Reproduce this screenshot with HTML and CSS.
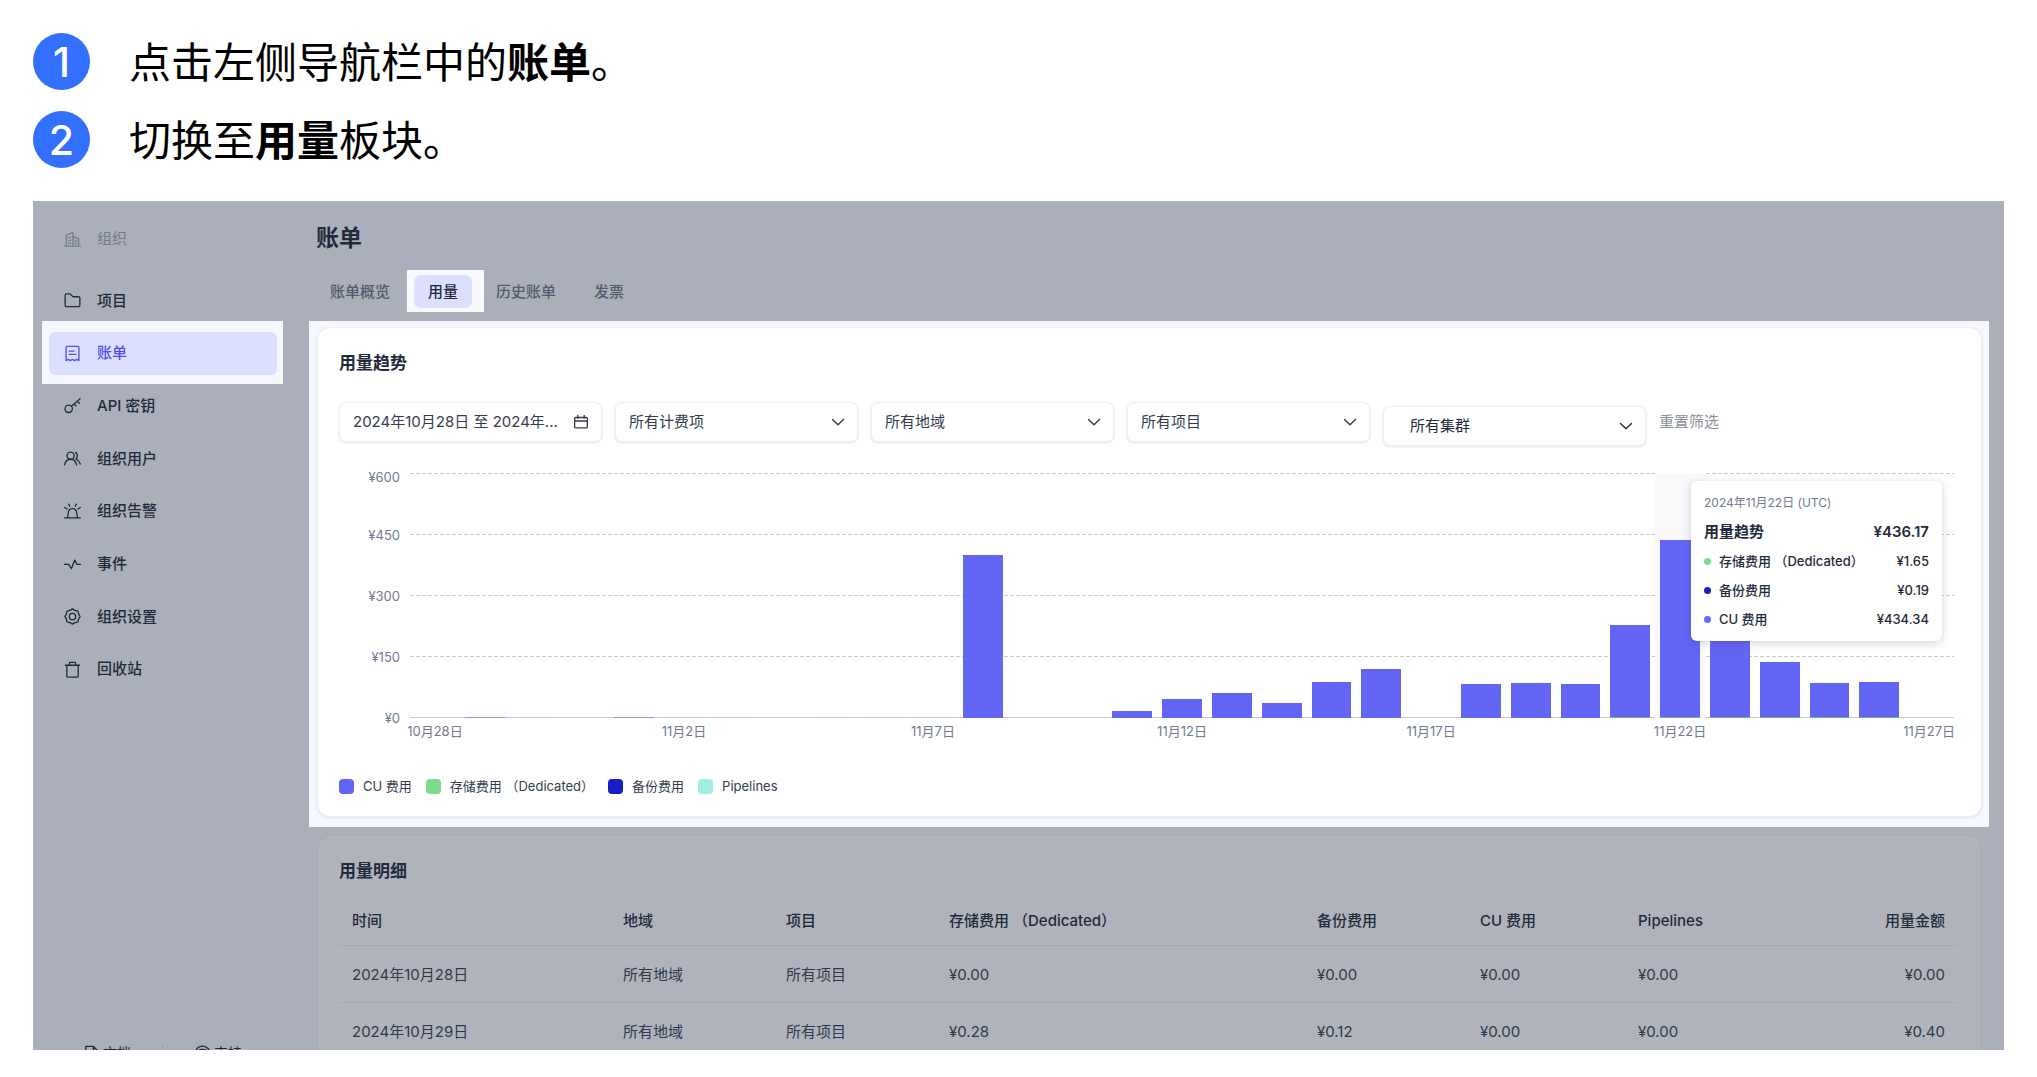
FILE: index.html
```html
<!DOCTYPE html>
<html lang="zh-CN">
<head>
<meta charset="utf-8">
<title>账单用量</title>
<link rel="stylesheet" href="styles.css">
</head>
<body>
<ol class="steps">
  <li><span class="step-no">1</span><p>点击左侧导航栏中的<b>账单</b>。</p></li>
  <li><span class="step-no">2</span><p>切换至<b>用量</b>板块。</p></li>
</ol>

<div class="app">
  <aside class="sidebar">
    <div class="org">
      <svg class="icon" viewBox="0 0 18 18"><path d="M0 16h18M2.500 16V4.500L9.500 1.500V16M9.500 6L15.500 8v8M5 7h2M5 10h2M5 13h2M11.500 10.500h2M11.500 13.200h2"/></svg>
      <span>组织</span>
    </div>
    <nav>
      <ul class="menu">
        <li><a href="#"><svg class="icon" viewBox="0 0 18 18"><path d="M1.200 3.500a1.500 1.500 0 0 1 1.500-1.500h3.800l3 3h5.800a1.500 1.500 0 0 1 1.500 1.500v7.500a1.500 1.500 0 0 1-1.500 1.500H2.700a1.500 1.500 0 0 1-1.500-1.500z"/></svg><span>项目</span></a></li>
        <li class="current"><a href="#" aria-current="page"><svg class="icon" viewBox="0 0 18 18"><path d="M2.200 16.500V2.500a1 1 0 0 1 1-1h11.600a1 1 0 0 1 1 1v14l-2.300-1.200-2.200 1.200-2.300-1.200-2.300 1.200-2.200-1.200zM5.500 6.500h5M5.500 10h7"/></svg><span>账单</span></a></li>
        <li><a href="#"><svg class="icon" viewBox="0 0 18 18"><circle cx="5" cy="12.500" r="3.900"/><path d="M7.900 9.700L17 1.800M10.800 7.200l2 2.400M14.200 4.300l2 2.300"/></svg><span>API 密钥</span></a></li>
        <li><a href="#"><svg class="icon" viewBox="0 0 18 18"><circle cx="7" cy="6" r="3.800"/><path d="M.6 15.800c.8-3.800 3.400-6 6.400-6s5.500 2.200 6.300 6M12.300 2.500c2.400 1.600 2.400 5.200.3 7 2.200 1 3.900 2.700 4.700 5.300"/></svg><span>组织用户</span></a></li>
        <li><a href="#"><svg class="icon" viewBox="0 0 18 18"><path d="M.8 15.800h16.400M3.800 15.500l1-6.500c.3-1.800 1.800-3 4.200-3s3.900 1.200 4.200 3l1 6.500M5 1.200l1.100 2.200M13 1.200l-1.100 2.200M.8 4.700l2.300 1.500M17.200 4.700l-2.300 1.500"/></svg><span>组织告警</span></a></li>
        <li><a href="#"><svg class="icon" viewBox="0 0 18 18"><path d="M.5 8.800H5l2.800 4.700 3.600-9.200 2.200 4.500h4"/></svg><span>事件</span></a></li>
        <li><a href="#"><svg class="icon" viewBox="0 0 18 18"><path d="M9 .9l2.600 1.600 3.200.7.700 3.200L17.100 9l-1.600 2.600-.7 3.200-3.200.7L9 17.100l-2.600-1.600-3.200-.7-.7-3.200L.9 9l1.600-2.600.7-3.200 3.200-.7z"/><circle cx="9" cy="9" r="3.400"/></svg><span>组织设置</span></a></li>
        <li><a href="#"><svg class="icon" viewBox="0 0 18 18"><path d="M1.500 4.500h15M3 4.800v11a1.300 1.300 0 0 0 1.300 1.300h9.400a1.300 1.300 0 0 0 1.300-1.300v-11M5.500 4.300L6 1.500h6l.5 2.800"/></svg><span>回收站</span></a></li>
      </ul>
    </nav>
    <div class="sidebar-foot">
      <a href="#"><svg class="icon" viewBox="0 0 18 18"><path d="M3 1.500h8l4.500 4.500v10.500H3zM11 1.500V6h4.500"/></svg>文档</a>
      <i></i>
      <a href="#"><svg class="icon" viewBox="0 0 18 18"><circle cx="9" cy="9" r="7.800"/><path d="M3 6.500c3.500-2 8.500-2 12 0M6 9h6v4H6z"/></svg>支持</a>
    </div>
  </aside>

  <main>
    <header class="page-head">
      <h1>账单</h1>
      <div class="tabs" role="tablist">
        <button role="tab">账单概览</button>
        <button role="tab" class="active" aria-selected="true">用量</button>
        <button role="tab">历史账单</button>
        <button role="tab">发票</button>
      </div>
    </header>

    <div class="spotlight">
      <section class="card trend">
        <h2>用量趋势</h2>
        <form class="filters">
          <button type="button" class="field date">
            <span>2024年10月28日 至 2024年...</span>
            <svg viewBox="0 0 14 14"><path d="M1.600 2.500h10.800a1 1 0 0 1 1 1v8.400a1 1 0 0 1-1 1H1.600a1 1 0 0 1-1-1V3.500a1 1 0 0 1 1-1zM.6 6h12.800M3.800.5v2.800M10.200.5v2.800"/></svg>
          </button>
          <label class="pick"><select class="field" aria-label="计费项"><option>所有计费项</option></select><svg viewBox="0 0 14 14"><path d="M1.500 4.500L7 9.800l5.500-5.300"/></svg></label>
          <label class="pick"><select class="field" aria-label="地域"><option>所有地域</option></select><svg viewBox="0 0 14 14"><path d="M1.500 4.500L7 9.800l5.500-5.300"/></svg></label>
          <label class="pick"><select class="field" aria-label="项目"><option>所有项目</option></select><svg viewBox="0 0 14 14"><path d="M1.500 4.500L7 9.800l5.500-5.300"/></svg></label>
          <label class="pick cluster"><select class="field" aria-label="集群"><option>所有集群</option></select><svg viewBox="0 0 14 14"><path d="M1.500 4.500L7 9.800l5.500-5.300"/></svg></label>
          <button type="reset" class="reset">重置筛选</button>
        </form>

        <div class="chart">
          <ul class="y-axis"><li>¥600</li><li>¥450</li><li>¥300</li><li>¥150</li><li>¥0</li></ul>
          <div class="plot">
            <div class="lines"><i></i><i></i><i></i><i></i><i></i></div>
            <div class="bars">
              <div></div>
              <div><i class="trace"></i></div>
              <div><i class="faint"></i></div>
              <div></div>
              <div><i class="trace"></i></div>
              <div><i class="faint"></i></div>
              <div><i class="faint"></i></div>
              <div></div>
              <div><i class="faint"></i></div>
              <div><i class="faint"></i></div>
              <div><i class="faint"></i></div>
              <div><i style="height:66.500%"></i></div>
              <div></div>
              <div></div>
              <div><i style="height:2.800%"></i></div>
              <div><i style="height:7.700%"></i></div>
              <div><i style="height:10.200%"></i></div>
              <div><i style="height:6.100%"></i></div>
              <div><i style="height:14.800%"></i></div>
              <div><i style="height:20%"></i></div>
              <div></div>
              <div><i style="height:13.800%"></i></div>
              <div><i style="height:14.200%"></i></div>
              <div><i style="height:13.800%"></i></div>
              <div><i class="stored" style="height:38%"></i></div>
              <div class="hover"><i class="stored" style="height:72.700%"></i></div>
              <div><i class="stored" style="height:48%"></i></div>
              <div><i class="stored" style="height:22.800%"></i></div>
              <div><i class="stored" style="height:14.400%"></i></div>
              <div><i class="stored" style="height:14.600%"></i></div>
              <div></div>
            </div>
            <div class="tip">
              <p class="tip-date">2024年11月22日 (UTC)</p>
              <p class="tip-total"><span>用量趋势</span><span>¥436.17</span></p>
              <p><i class="dot green"></i><span>存储费用 （Dedicated）</span><span>¥1.65</span></p>
              <p><i class="dot navy"></i><span>备份费用</span><span>¥0.19</span></p>
              <p><i class="dot indigo"></i><span>CU 费用</span><span>¥434.34</span></p>
            </div>
          </div>
          <ul class="x-axis"><li>10月28日</li><li>11月2日</li><li>11月7日</li><li>11月12日</li><li>11月17日</li><li>11月22日</li><li>11月27日</li></ul>
        </div>

        <ul class="legend">
          <li><i class="indigo"></i>CU 费用</li>
          <li><i class="green"></i>存储费用 （Dedicated）</li>
          <li><i class="navy"></i>备份费用</li>
          <li><i class="aqua"></i>Pipelines</li>
        </ul>
      </section>
    </div>

    <section class="card detail">
      <h2>用量明细</h2>
      <table>
        <colgroup><col class="c-time"><col class="c-std"><col class="c-std"><col class="c-store"><col class="c-std"><col class="c-cu"><col class="c-std"><col></colgroup>
        <thead>
          <tr><th>时间</th><th>地域</th><th>项目</th><th>存储费用 （Dedicated）</th><th>备份费用</th><th>CU 费用</th><th>Pipelines</th><th>用量金额</th></tr>
        </thead>
        <tbody>
          <tr><td>2024年10月28日</td><td>所有地域</td><td>所有项目</td><td>¥0.00</td><td>¥0.00</td><td>¥0.00</td><td>¥0.00</td><td>¥0.00</td></tr>
          <tr><td>2024年10月29日</td><td>所有地域</td><td>所有项目</td><td>¥0.28</td><td>¥0.12</td><td>¥0.00</td><td>¥0.00</td><td>¥0.40</td></tr>
        </tbody>
      </table>
    </section>
  </main>
</div>
</body>
</html>
```

FILE: styles.css
```css
* { box-sizing: border-box; }
body, h1, h2, p, ul, ol { margin: 0; padding: 0; }
ul, ol { list-style: none; }
button, select { font: inherit; color: inherit; background: none; border: 0; padding: 0; }
a { color: inherit; text-decoration: none; }

body {
  display: flex;
  flex-direction: column;
  height: 100vh;
  padding: 33px 33px 27px;
  background: #fff;
  color: #1f2b3d;
  font: 15px/20px Inter, "Noto Sans CJK SC", sans-serif;
}

/* instructions */
.steps { display: grid; gap: 21px; margin-bottom: 33px; color: #000; }
.steps li { display: flex; align-items: flex-start; gap: 39px; height: 57px; }
.steps p { font: 42px/54px "Noto Sans CJK SC", sans-serif; }
.step-no {
  width: 57px;
  height: 57px;
  border-radius: 50%;
  background: #3370ff;
  color: #fff;
  font-size: 41px;
  font-weight: 500;
  line-height: 58px;
  text-align: center;
}

/* application frame */
.app {
  flex: 1;
  min-height: 0;
  display: flex;
  overflow: hidden;
  background: #abafba;
}
.icon { width: 17px; height: 17px; flex: none; }
svg { fill: none; stroke: currentColor; stroke-width: 1.4; stroke-linecap: round; stroke-linejoin: round; }

/* sidebar */
.sidebar {
  display: flex;
  flex-direction: column;
  flex: 0 0 276px;
  padding: 28px 32px 0 16px;
}
.org, .menu a { display: flex; align-items: center; gap: 16px; padding-left: 15px; }
.org { height: 20px; margin-bottom: 30px; color: #747b8a; }
.menu {
  display: flex;
  flex-direction: column;
  justify-content: space-between;
  height: 412px;
  font-weight: 500;
}
.menu a { position: relative; height: 43px; border-radius: 6px; }
.menu .current { position: relative; z-index: 0; color: #4f4dfa; }
.menu .current a { background: #dcdffd; }
.menu .current::before {
  content: "";
  position: absolute;
  z-index: -1;
  inset: -11px -6px -9px -7px;
  background: #f7f8fe;
}
.sidebar-foot {
  display: flex;
  align-items: center;
  margin: auto 0 -13px;
  padding-left: 34px;
  font-size: 14px;
}
.sidebar-foot a { display: flex; align-items: center; gap: 3px; }
.sidebar-foot i { width: 1px; height: 16px; margin: 0 31px; background: #969daa; }

/* main column */
main { flex: 1; min-width: 0; padding: 22px 15px 0 0; }
.page-head { padding-left: 7px; margin-bottom: 13px; }
h1 { font-size: 23px; line-height: 30px; font-weight: 600; }
.tabs { display: flex; gap: 10px; margin-top: 22px; color: #505b6e; font-weight: 500; }
.tabs button { height: 33px; padding: 0 14px; border-radius: 7px; }
.tabs .active { position: relative; z-index: 0; color: #1f2b3d; }
.tabs .active::before, .tabs .active::after { content: ""; position: absolute; }
.tabs .active::before { z-index: -2; inset: -5px -12px -4px -7px; background: #f9f9ff; }
.tabs .active::after { z-index: -1; inset: 0; border-radius: 7px; background: #dcdffd; }

.spotlight { padding: 6px 7px 10px 8px; background: #f7f8fe; }
.card { border: 1px solid #eef0f7; border-radius: 13px; padding: 22px 23px 20px 21px; }
h2 { font-size: 17px; line-height: 26px; font-weight: 600; }
.trend { background: #fff; box-shadow: 0 1px 3px #dfe1ea; }

/* filters */
.filters { display: flex; align-items: flex-start; gap: 13px; margin-top: 26px; color: #323e50; }
.field {
  width: 100%;
  height: 40px;
  padding: 0 13px;
  border: 1px solid #eceff6;
  border-radius: 7px;
  background: #fff;
  box-shadow: 0 1px 3px #e3e5ea;
  appearance: none;
}
.date { display: flex; align-items: center; justify-content: space-between; flex: 0 1 263px; white-space: nowrap; }
.filters svg { width: 14px; height: 14px; }
.pick { display: grid; align-items: center; flex: 0 1 243px; }
.pick > * { grid-area: 1 / 1; }
.pick svg { justify-self: end; margin-right: 13px; pointer-events: none; }
.cluster { flex-basis: 263px; margin-top: 4px; color: #1f2b3d; }
.cluster .field { padding-left: 26px; }
.reset { height: 40px; color: #8b909a; }

/* chart */
.chart {
  display: grid;
  grid-template: 245px auto / 61px 1fr;
  column-gap: 10px;
  margin: 27px 4px 0 0;
  color: #707b92;
  font-size: 13px;
  line-height: 18px;
}
.y-axis { display: grid; grid-template-rows: repeat(5, 61px); align-items: center; margin: -30px 0; text-align: right; }
.y-axis li:first-child { padding-top: 6px; }
.plot { position: relative; display: grid; }
.lines, .bars { grid-area: 1 / 1; min-height: 0; }
.lines { display: flex; flex-direction: column; justify-content: space-between; }
.lines i { height: 1px; background: repeating-linear-gradient(90deg, #c9cacd 0 4px, #fff 4px 6px); }
.lines i:last-child { background: #c6c8ca; }
.bars { display: grid; grid-template-columns: repeat(31, 1fr); }
.bars div { display: flex; align-items: flex-end; min-width: 0; padding: 0 5px; }
.bars i { flex: 1; background: #6366f5; }
.bars .hover { background: #f9f9fc; }
.bars .trace { height: 1px; background: #9094e0; }
.bars .faint { height: 1px; background: #bdccca; }
.bars .stored { border-bottom: 1px solid #74a8b5; }
.x-axis { grid-column: 2; display: flex; justify-content: space-between; margin-top: 4px; white-space: nowrap; }
.x-axis li { display: flex; justify-content: center; width: calc(100% / 31); }

.tip {
  position: absolute;
  top: 8px;
  right: 12px;
  display: grid;
  gap: 9px;
  width: 251px;
  padding: 12px 13px;
  border-radius: 6px;
  background: #fff;
  box-shadow: 0 2px 10px rgba(30, 40, 70, .2);
  color: #1f2b3d;
  font-weight: 500;
  line-height: 20px;
}
.tip p { display: flex; align-items: center; gap: 8px; }
.tip span:last-child { margin-left: auto; }
.tip .tip-date { color: #707b92; font-size: 12px; font-weight: 400; }
.tip .tip-total { font-size: 15px; font-weight: 600; }
.dot { width: 7px; height: 7px; border-radius: 50%; }

.legend { display: flex; gap: 14px; margin-top: 36px; color: #323e50; font-size: 13px; }
.legend li { display: flex; align-items: center; gap: 9px; }
.legend i { width: 15px; height: 15px; border-radius: 4px; }
.indigo { background: #6366f5; }
.green { background: #7bdd8b; }
.navy { background: #171cc4; }
.aqua { background: #a1eee3; }

/* detail table */
.detail { margin: 8px 7px 0 8px; border-color: #a5aab6; background: #b0b3bb; }
table { width: 100%; margin-top: 12px; border-collapse: collapse; table-layout: fixed; }
.c-time { width: 271px; }
.c-std { width: 163px; }
.c-cu { width: 158px; }
.c-store { width: 368px; }
th, td { height: 57px; padding: 2px 13px 0; border-bottom: 1px solid #a3a9b5; text-align: left; }
th { height: 49px; font-weight: 500; }
th:last-child, td:last-child { text-align: right; }
td { color: #2e3a4b; }
```
